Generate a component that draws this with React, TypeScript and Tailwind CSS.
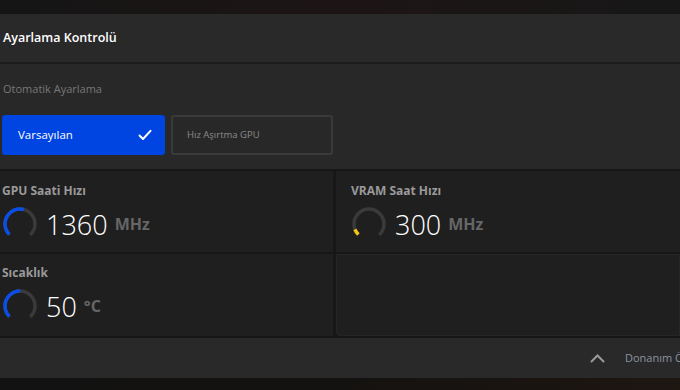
import React from "react";

type Gauge = {
  label: string;
  value: string;
  unit: string;
  percent: number;
  color: string;
};

const font = { fontFamily: '"Open Sans", "Noto Sans", sans-serif' };

const Ring = ({ percent, color }: { percent: number; color: string }) => {
  // 270° arc, open at the bottom
  const r = 15;
  const c = 2 * Math.PI * r;
  const track = c * 0.75;
  const fill = track * percent;
  return (
    <svg width="36" height="36" viewBox="1 1 36 36" className="shrink-0">
      <circle
        cx="19"
        cy="19"
        r={r}
        fill="none"
        stroke="#3a3a3a"
        strokeWidth="3.5"
        strokeDasharray={`${track} ${c}`}
        transform="rotate(135 19 19)"
      />
      <circle
        cx="19"
        cy="19"
        r={r}
        fill="none"
        stroke={color}
        strokeWidth="3.5"
        strokeDasharray={`${fill} ${c}`}
        transform="rotate(135 19 19)"
      />
    </svg>
  );
};

const GaugeCard = ({ g, className }: { g: Gauge; className: string }) => (
  <div className={`bg-[#1f1f1f] ${className}`}>
    <p className="text-[12px] font-bold leading-none text-[#9a9a9a]">{g.label}</p>
    <div className="mt-[9px] flex items-center">
      <Ring percent={g.percent} color={g.color} />
      <span className="ml-[8px] text-[27px] font-light leading-none text-white">{g.value}</span>
      <span className="ml-[7px] text-[16px] font-bold leading-none text-[#666666]">{g.unit}</span>
    </div>
  </div>
);

export default function App() {
  const gpu: Gauge = { label: "GPU Saati Hızı", value: "1360", unit: "MHz", percent: 0.55, color: "#0a4ee6" };
  const vram: Gauge = { label: "VRAM Saat Hızı", value: "300", unit: "MHz", percent: 0.09, color: "#f2c417" };
  const temp: Gauge = { label: "Sıcaklık", value: "50", unit: "°C", percent: 0.5, color: "#0a4ee6" };

  return (
    <div style={font} className="h-[390px] w-[680px] overflow-hidden bg-[#141414]">
      <div className="h-[14px] bg-gradient-to-r from-[#151515] via-[#1d1515] to-[#171717]" />

      <div className="flex h-[48px] items-center bg-[#292929] pl-[3px]">
        <h1 className="text-[12.5px] font-semibold text-white">Ayarlama Kontrolü</h1>
      </div>
      <div className="h-[2px] bg-[#1c1c1c]" />

      <section className="h-[105px] bg-[#282828] pl-[2px] pt-[19px]">
        <p className="pl-[1px] text-[11px] leading-none text-[#777777]">Otomatik Ayarlama</p>
        <div className="mt-[21px] flex gap-[6px]">
          <button className="flex h-[40px] w-[163px] items-center justify-between rounded-[3px] bg-[#0044e2] pl-[16px] pr-[13px] text-[11.5px] text-white">
            Varsayılan
            <svg width="14" height="12" viewBox="0 0 14 12" fill="none">
              <path d="M1.5 6.5 L5 10 L12.5 1.8" stroke="white" strokeWidth="2" strokeLinecap="round" strokeLinejoin="round" />
            </svg>
          </button>
          <button className="flex h-[40px] w-[162px] items-center rounded-[3px] border-2 border-[#3a3a3a] bg-[#282828] pl-[14px] text-[9.5px] text-[#8a8a8a]">
            Hız Aşırtma GPU
          </button>
        </div>
      </section>

      <div className="grid grid-cols-[333px_1fr] gap-x-[3px] gap-y-[2px] bg-[#171717] pt-[2px]">
        <GaugeCard g={gpu} className="h-[81px] pl-[2px] pt-[14px]" />
        <GaugeCard g={vram} className="h-[81px] pl-[15px] pt-[14px]" />
        <GaugeCard g={temp} className="h-[82px] pl-[2px] pt-[13px]" />
        <div className="h-[82px] rounded-bl-[4px] border border-[#262626] bg-[#1f1f1f]" />
      </div>

      <div className="h-[2px] bg-[#171717]" />
      <footer className="flex h-[40px] items-center overflow-hidden bg-[#292929] pl-[590px]">
        <svg width="15" height="9" viewBox="0 0 15 9" fill="none" className="shrink-0">
          <path d="M1.5 7.5 L7.5 1.5 L13.5 7.5" stroke="#9a9a9a" strokeWidth="2" strokeLinecap="round" />
        </svg>
        <span className="ml-[20px] whitespace-nowrap text-[11px] text-[#8b93a0]">Donanım Ö</span>
      </footer>
      <div className="h-[12px] bg-gradient-to-r from-[#121212] via-[#141210] to-[#1e1611]" />
    </div>
  );
}
